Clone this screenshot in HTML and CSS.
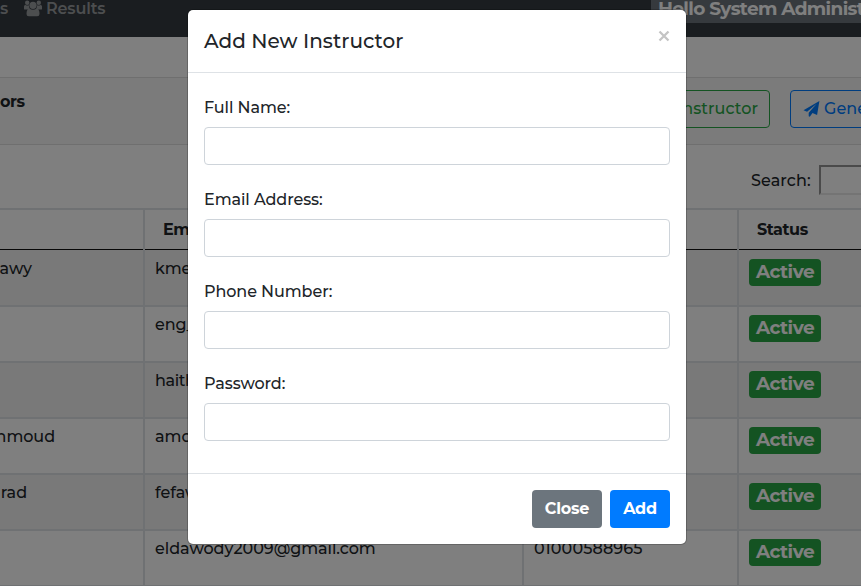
FILE: index.html
```
<!DOCTYPE html>
<html lang="en">
<head>
<meta charset="utf-8">
<title>Instructors</title>
<link rel="stylesheet" href="styles.css">
</head>
<body>
<div class="page">
  <nav class="navbar">
    <span class="nav-item nav-cut">s</span>
    <svg class="users" viewBox="0 0 18 17" fill="currentColor"><circle cx="3.2" cy="2.8" r="2.2"/><circle cx="14.8" cy="2.8" r="2.2"/><circle cx="9" cy="5.3" r="3.6"/><path d="M0 9V6.5Q0 4.800 1.500 5Q3.200 6 4.900 5.200Q4.800 7.500 6 8.500Q4.500 8.600 3.500 9.500H1Q0 9.500 0 9ZM18 9V6.500Q18 4.800 16.500 5Q14.800 6 13.100 5.200Q13.200 7.500 12 8.500Q13.500 8.600 14.500 9.500H17Q18 9.500 18 9ZM5.300 8.500Q9 11.200 12.700 8.500Q15.500 9 15.500 14Q15.500 16.300 13.200 16.300H4.800Q2.500 16.300 2.500 14Q2.500 9 5.300 8.500Z"/></svg>
    <span class="nav-item">Results</span>
    <span class="hello">Hello System Administ</span>
  </nav>
  <main class="card">
    <header class="card-header">
      <b class="card-title">ors</b>
      <button class="outline green">Add New Instructor</button>
      <button class="outline blue"><svg viewBox="0 0 16 16" fill="currentColor"><path d="M15.900 0 13.600 14 9 12.100 6.300 15.800 5.200 15.300V11.700L13.200 2.700 3.600 10.700 0 9.200Z"/></svg>Generate</button>
    </header>
    <div class="search"><label>Search:</label><input type="text"></div>
    <div class="table">
      <div class="row head"><div></div><div>Email</div><div></div><div>Status</div></div>
      <div class="row"><div><span class="name-awy">awy</span></div><div>kme</div><div></div><div><span class="badge">Active</span></div></div>
      <div class="row"><div></div><div>eng_</div><div></div><div><span class="badge">Active</span></div></div>
      <div class="row"><div></div><div class="mail-tight">haith</div><div></div><div><span class="badge">Active</span></div></div>
      <div class="row"><div><span class="name-moud">hmoud</span></div><div>amo</div><div></div><div><span class="badge">Active</span></div></div>
      <div class="row"><div><span class="name-rad">rad</span></div><div>fefaw</div><div></div><div><span class="badge">Active</span></div></div>
      <div class="row"><div></div><div>eldawody2009@gmail.com</div><div class="phone">01000588965</div><div><span class="badge">Active</span></div></div>
    </div>
  </main>
</div>
<div class="backdrop">
  <form class="modal">
    <header class="modal-header"><h5>Add New Instructor</h5><svg class="x" viewBox="0 0 12 12" fill="none" stroke="currentColor" stroke-width="2.3"><path d="M1.500 1.500 10.500 10.500M10.500 1.500 1.500 10.500"/></svg></header>
    <div class="modal-body">
      <label>Full Name:</label><input type="text">
      <label>Email Address:</label><input type="text">
      <label>Phone Number:</label><input type="text">
      <label>Password:</label><input type="text">
    </div>
    <footer class="modal-footer"><button type="button" class="btn close">Close</button><button type="button" class="btn add">Add</button></footer>
  </form>
</div>
</body>
</html>
```
FILE: styles.css
```
* { box-sizing: border-box; }
body { margin: 0; width: 861px; height: 586px; overflow: hidden; color: #212529; background: #fff; font: 500 16px/24px Montserrat, Inter, "Liberation Sans", sans-serif; letter-spacing: -.05px; }
button, input { font: inherit; letter-spacing: inherit; }
.page { width: 861px; height: 586px; overflow: hidden; }
.navbar { height: 37px; background: #343a40; display: flex; align-items: flex-start; overflow: hidden; }
.nav-item { margin-top: -3px; color: #999c9f; font-weight: 600; letter-spacing: -.15px; }
.nav-cut { width: 8px; display: flex; justify-content: flex-end; }
.users { width: 18px; height: 17px; margin: 0 4px 0 16px; color: #999c9f; }
.hello { margin-left: auto; width: 210px; height: 23px; padding-left: 7px; background: #6c757d; color: #fff; font-weight: 700; font-size: 18.5px; line-height: 18px; white-space: nowrap; overflow: hidden; letter-spacing: -.65px; }
.card { margin-top: 40px; border-top: 1px solid #dfdfdf; }
.card-header { height: 67px; display: flex; background: #f7f7f7; border-bottom: 1px solid #dfdfdf; padding-top: 12px; overflow: hidden; }
.card-title { width: 582px; flex: none; font-weight: 700; letter-spacing: -.4px; }
.outline { height: 38px; flex: none; background: transparent; border: 1px solid; border-radius: 4px; padding: 0 12px; white-space: nowrap; letter-spacing: .05px; }
.green { width: 188px; color: #28a745; padding: 0 11px 0 12px; text-align: right; }
.blue { margin-left: 20px; width: 140px; color: #007bff; display: flex; align-items: center; }
.blue svg { width: 17px; height: 16px; margin-right: 4px; }
.search { height: 63px; padding: 20px 0 0 751px; display: flex; overflow: hidden; }
.search label { width: 68px; flex: none; margin-top: 4px; letter-spacing: .1px; }
.search input { flex: none; width: 180px; height: 30px; border: 2px solid; border-color: #949494 #e8e8e8 #e8e8e8 #949494; background: #fff; }
.table { border-top: 2px solid #dee2e6; }
.row { display: grid; grid-template-columns: 143px 379px 215px 124px; height: 56px; border-bottom: 2px solid #dee2e6; }
.row > div { padding: 6px 10px; white-space: nowrap; border-left: 2px solid #dee2e6; }
.row > div:first-child { border-left: 0; padding: 6px 0; }
.row:nth-child(even) { background: #f2f2f2; }
.row.head { height: 40px; border-bottom: 1px solid #111; font-weight: 700; letter-spacing: -.4px; }
.row.head > div { padding: 8px 18px; }
.row:nth-child(2) { height: 57px; }
.row:nth-child(2) > div { padding-top: 7px; }
.row:first-child > div:first-child { padding: 0; }
.name-awy, .name-moud, .name-rad { display: flex; justify-content: flex-end; }
.name-awy { width: 32px; }
.name-moud { width: 55px; }
.name-rad { width: 27px; }
.row .mail-tight { letter-spacing: -.4px; }
.row .phone { letter-spacing: .12px; }
.badge { display: block; width: 72px; height: 27px; margin-top: 2px; text-align: center; border-radius: 4px; background: #28a745; color: #fff; font-weight: 700; font-size: 18.5px; line-height: 26px; letter-spacing: -.5px; }
.backdrop { position: absolute; inset: 0; background: rgba(0,0,0,.5); display: flex; justify-content: center; align-items: flex-start; padding: 10px 0 0 13px; }
.modal { width: 498px; height: 534px; background: #fff; border-radius: 5px; box-shadow: 0 0 0 1px rgba(0,0,0,.2); }
.modal-header { height: 63px; display: flex; justify-content: space-between; padding: 16px; border-bottom: 1px solid #dee2e6; }
h5 { margin: 0; font-size: 20px; line-height: 30px; font-weight: 500; letter-spacing: .02px; }
.x { color: #c4c4c4; width: 12px; height: 12px; margin-top: 4px; }
.modal-body { height: 400px; padding: 23px 16px 0; }
.modal-body label { display: block; letter-spacing: -.08px; }
.modal-body input { display: block; width: 100%; height: 38px; margin: 7px 0 23px; border: 1px solid #ced4da; border-radius: 4px; background: #fff; }
.modal-footer { height: 71px; display: flex; gap: 8px; justify-content: flex-end; border-top: 1px solid #dee2e6; padding: 16px; }
.btn { height: 38px; border: 0; border-radius: 4px; padding: 0; color: #fff; font-weight: 700; letter-spacing: -.2px; }
.close { width: 70px; background: #6c757d; }
.add { width: 60px; background: #007bff; }
```
